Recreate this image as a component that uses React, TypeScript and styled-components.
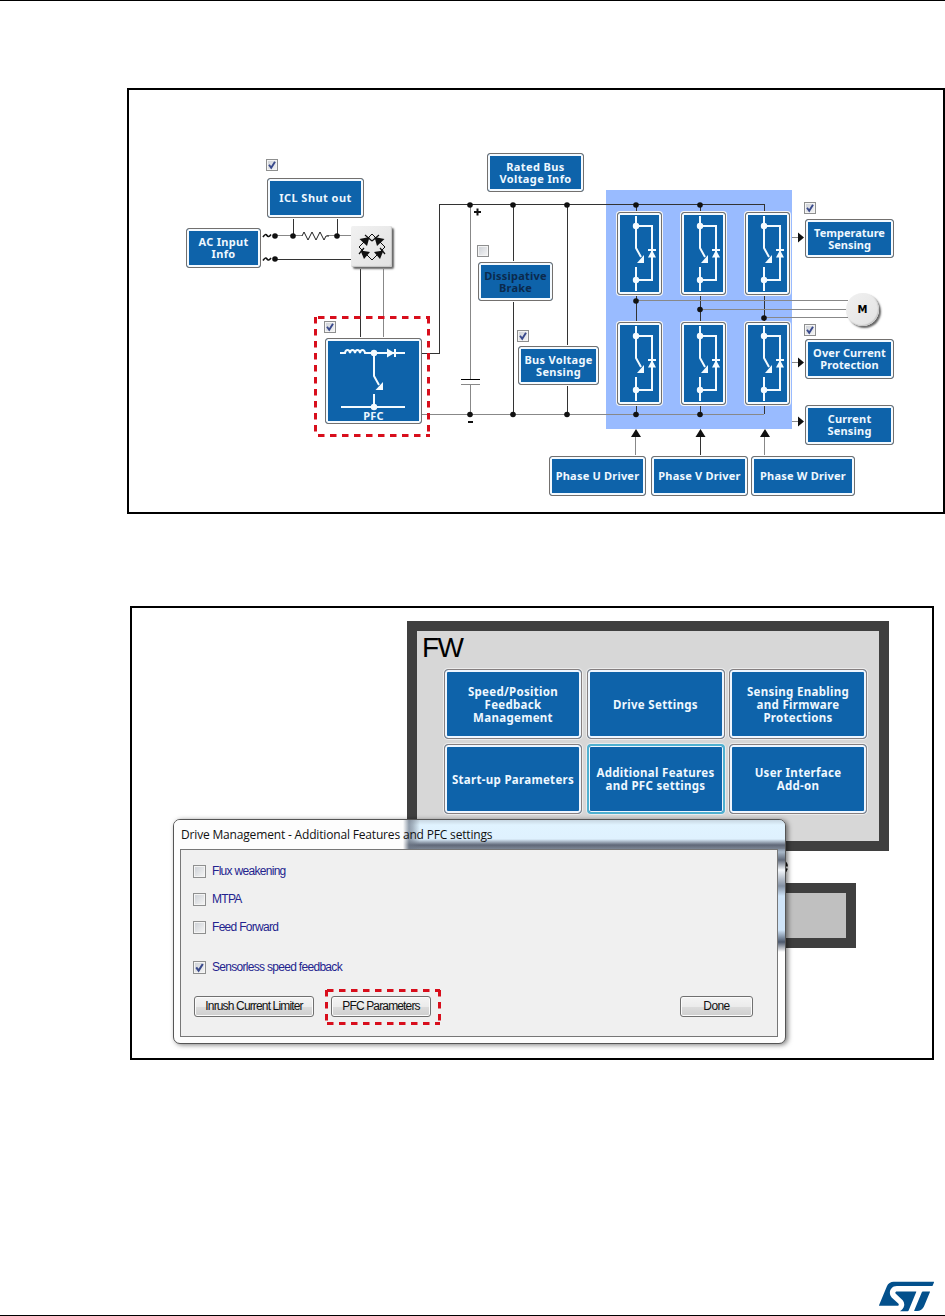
import React, { FC, ReactNode } from "react";
import styled, { createGlobalStyle } from "styled-components";
import { SiStmicroelectronics } from "react-icons/si";

const BLUE = "#0e63aa";
const RED = "#d80e1c";

// the schematic keeps its own coordinate system, this is its top left corner
const ORIGIN = { x: 129, y: 90 };

const GlobalStyle = createGlobalStyle`
  body {
    margin: 0;
    background: #fff;
  }
  * {
    box-sizing: border-box;
  }
`;

const Page = styled.div`
  width: 945px;
  height: 1316px;
  display: flex;
  flex-direction: column;
  overflow: hidden;
  border-top: 1px solid #000;
  border-bottom: 1px solid #000;
`;

const Frame = styled.section<{ $w: number; $h: number }>`
  position: relative;
  flex: none;
  width: ${(p) => p.$w}px;
  height: ${(p) => p.$h}px;
  border: 2px solid #000;
`;

const SchematicFrame = styled(Frame)`
  margin: 87px 0 0 127px;
`;

const FirmwareFrame = styled(Frame)`
  margin: 92px 0 0 130px;
`;

const Wires = styled.svg`
  position: absolute;
  inset: 0;
  width: 814px;
  height: 422px;
`;

interface Place {
  $x: number;
  $y: number;
}

const Node = styled.div<Place & { $w: number; $h: number; $halo?: boolean }>`
  position: absolute;
  left: ${(p) => p.$x - ORIGIN.x}px;
  top: ${(p) => p.$y - ORIGIN.y}px;
  width: ${(p) => p.$w}px;
  height: ${(p) => p.$h}px;
  display: flex;
  flex-direction: column;
  align-items: center;
  justify-content: center;
  background: ${BLUE};
  border: 1px solid #73706e;
  border-radius: 3px;
  box-shadow: inset 0 0 0 2px #f4faff
    ${(p) => (p.$halo ? ", 0 0 0 1px #f4f4f4" : "")};
`;

const Line = styled.span<{ $track?: number; $dark?: boolean }>`
  font: 700 11px/12px "Noto Sans", sans-serif;
  letter-spacing: ${(p) => p.$track ?? 0.2}px;
  white-space: nowrap;
  color: ${(p) => (p.$dark ? "#0b2a4d" : "#eef8ff")};
`;

const PfcLine = styled(Line)`
  margin-top: auto;
  padding-bottom: 1px;
`;

const CheckBox = styled.span<{ $size: number }>`
  flex: none;
  width: ${(p) => p.$size}px;
  height: ${(p) => p.$size}px;
  display: flex;
  border: 1px solid #8e8f8f;
  box-shadow: inset 0 0 0 1px #f4f4f4;
  background: linear-gradient(135deg, #cbcfd5, #f6f6f6);
`;

const NodeCheck = styled.div<Place>`
  position: absolute;
  left: ${(p) => p.$x - ORIGIN.x}px;
  top: ${(p) => p.$y - ORIGIN.y}px;
`;

const Symbol = styled.svg`
  position: absolute;
  left: -1px;
  top: -1px;
  fill: #f4fbff;
  stroke: none;

  path.wire {
    fill: none;
    stroke: #f4fbff;
    stroke-width: 2;
  }
`;

const Bevel = styled.div<Place & { $w: number; $h: number; $round?: boolean }>`
  position: absolute;
  left: ${(p) => p.$x - ORIGIN.x}px;
  top: ${(p) => p.$y - ORIGIN.y}px;
  width: ${(p) => p.$w}px;
  height: ${(p) => p.$h}px;
  display: flex;
  align-items: center;
  justify-content: center;
  border-radius: ${(p) => (p.$round ? "50%" : "2px")};
  background: linear-gradient(135deg, #f1f1f1, #e2e2e2);
  box-shadow: inset -1px -1px 1px #c4c4c4, 2px 2px 2px #666;
  font: 700 10px "DejaVu Sans", sans-serif;
  color: #000;
`;

const Tick: FC<{ checked?: boolean; size?: number }> = ({
  checked,
  size = 12,
}) => (
  <CheckBox $size={size}>
    {checked && (
      <svg viewBox="0 0 10 10" width="100%" height="100%">
        <path
          d="M2 4.8 L4.2 7.8 L8 1.8"
          fill="none"
          stroke="#3a4a8c"
          strokeWidth="1.9"
        />
      </svg>
    )}
  </CheckBox>
);

interface BlockProps {
  x: number;
  y: number;
  w: number;
  h: number;
  lines: string[];
  track?: number;
  dark?: boolean;
}

const BLOCKS: BlockProps[] = [
  { x: 267, y: 178, w: 97, h: 40, lines: ["ICL Shut out"], track: 0.45 },
  { x: 186, y: 228, w: 75, h: 40, lines: ["AC Input", "Info"], track: 0.3 },
  {
    x: 487,
    y: 153,
    w: 97,
    h: 39,
    lines: ["Rated Bus", "Voltage Info"],
    track: 0.4,
  },
  { x: 478, y: 262, w: 75, h: 39, lines: ["Dissipative", "Brake"], dark: true },
  { x: 518, y: 346, w: 81, h: 39, lines: ["Bus Voltage", "Sensing"], track: 0.3 },
  { x: 805, y: 219, w: 89, h: 39, lines: ["Temperature", "Sensing"], track: 0 },
  { x: 805, y: 339, w: 89, h: 40, lines: ["Over Current", "Protection"], track: 0.1 },
  { x: 805, y: 405, w: 89, h: 40, lines: ["Current", "Sensing"] },
  { x: 549, y: 456, w: 97, h: 40, lines: ["Phase U Driver"] },
  { x: 651, y: 456, w: 97, h: 40, lines: ["Phase V Driver"] },
  { x: 751, y: 456, w: 104, h: 40, lines: ["Phase W Driver"] },
];

const CHECKS = [
  { x: 266, y: 159, checked: true },
  { x: 324, y: 321, checked: true },
  { x: 477, y: 245, checked: false },
  { x: 517, y: 330, checked: true },
  { x: 804, y: 202, checked: true },
  { x: 804, y: 324, checked: true },
];

const SWITCHES = [617, 681, 745].flatMap((x) => [
  { x, y: 212 },
  { x, y: 322 },
]);

const DOTS = [
  [275, 236], [293, 236], [337, 236], [275, 259],
  [470, 205], [513, 205], [567, 205], [636, 205], [700, 205],
  [470, 414.5], [513, 414.5], [567, 414.5], [636, 414.5], [700, 414.5],
  [636, 301], [700, 309.5], [764, 318],
];

const SwitchSymbol = () => (
  <Symbol width="45" height="83" viewBox="617 212 45 83">
    <path
      className="wire"
      d="M636 216V248L641 257M636 226H652V280H636M636 267V291M648 250H656"
    />
    <circle cx="636" cy="226" r="3.2" />
    <circle cx="636" cy="280" r="3.2" />
    <path d="M652 250L656 257.5H648ZM644 255V263H637Z" />
  </Symbol>
);

const PfcSymbol = () => (
  <Symbol width="97" height="86" viewBox="325 338 97 86">
    <path
      className="wire"
      d="M340 353H345A2.6 4 0 0 1 350 353A2.6 4 0 0 1 355 353A2.6 4 0 0 1 360 353A2.6 4 0 0 1 365 353H405M395 349V357M374 353V376L379 385M374 394V407M341 407H405"
    />
    <circle cx="374" cy="353" r="3.2" />
    <circle cx="374" cy="407" r="3.2" />
    <path d="M387 348.5V357.5L394.5 353ZM383 382V390H375.5Z" />
  </Symbol>
);

const Schematic = () => (
  <SchematicFrame $w={818} $h={426}>
    <Wires viewBox="129 90 814 422">
      <rect x="606" y="190" width="186" height="239" fill="#99bbff" />
      <g fill="none" stroke="#333" shapeRendering="crispEdges">
        <path d="M293.5 219V236M337.5 219V236M275 259.5H352" />
        <path d="M360.5 269V337M422 353.5H439.5V204.5H764.5V211" />
        <path d="M513.5 205V261M513.5 302V414M567.5 205V345M567.5 386V414" />
        <path d="M636.5 205V211M700.5 205V211M636.5 296V321M700.5 296V321M764.5 296V321" />
        <path d="M636.5 406V414M700.5 406V414M764.5 406V414M700.5 436V455" />
        <path d="M461 379.5H480" stroke="#000" />
      </g>
      <g fill="none" stroke="#888" shapeRendering="crispEdges">
        <path d="M275 235.5H302M327 235.5H352M383.5 269V337" />
        <path d="M470.5 205V379M470.5 384V414M461 384H480M422 414.5H764" />
        <path d="M636 300.5H848M700 309.5H848M764 317.5H848" />
        <path d="M635.5 436V455M764.5 436V455M792 237.5H798M792 362.5H798M792 421.5H798" />
      </g>
      <path
        d="M302 236L304 232L308 240L312 232L316 240L320 232L324 240L326 236H329"
        fill="none"
        stroke="#222"
      />
      <g fill="#111">
        {DOTS.map(([x, y]) => (
          <circle key={`${x}-${y}`} cx={x} cy={y} r="2.8" />
        ))}
        <path d="M636 429L641 437H631ZM700.5 429L705.5 437H695.5ZM765 429L770 437H760Z" />
        <path d="M804 237.5L798 232.5V242.5ZM804 362.5L798 357.5V367.5ZM804 421.5L798 416.5V426.5Z" />
        <path d="M474 211H481V213H474ZM476.5 208.5H478.5V215.5H476.5ZM468 421H473V423H468Z" />
      </g>
      <g fill="none" stroke="#111" strokeWidth="1.6">
        <path d="M263 237Q265.500 233 267 235.500T271 234.500" />
        <path d="M263 260.500Q265.500 256.500 267 259T271 258" />
      </g>
      <g fill="none" stroke={RED} strokeWidth="3" strokeDasharray="6.5 5.5">
        <path d="M318 317.5H430M318 435.5H430" />
        <path d="M315.5 317V437M428.5 317V437" />
      </g>
    </Wires>

    {BLOCKS.map((b) => (
      <Node key={b.lines.join()} $x={b.x} $y={b.y} $w={b.w} $h={b.h}>
        {b.lines.map((text) => (
          <Line key={text} $track={b.track} $dark={b.dark}>
            {text}
          </Line>
        ))}
      </Node>
    ))}

    <Node $x={325} $y={338} $w={97} $h={86}>
      <PfcSymbol />
      <PfcLine>PFC</PfcLine>
    </Node>

    {SWITCHES.map((s) => (
      <Node key={`${s.x}-${s.y}`} $x={s.x} $y={s.y} $w={45} $h={83} $halo>
        <SwitchSymbol />
      </Node>
    ))}

    {CHECKS.map((c) => (
      <NodeCheck key={`${c.x}-${c.y}`} $x={c.x} $y={c.y}>
        <Tick checked={c.checked} />
      </NodeCheck>
    ))}

    {/* Rectifier bridge */}
    <Bevel $x={351} $y={226} $w={41} $h={41}>
      <svg width="30" height="30" viewBox="-15 -15 30 30">
        <path d="M0 -13L13 0L0 13L-13 0Z" fill="none" stroke="#111" />
        <path
          d="M-7 -12L0 -6M7 -12L0 -6M-13 7L-8 1M13 7L8 1"
          fill="none"
          stroke="#111"
          strokeWidth="1.2"
        />
        <g fill="#111">
          <path d="M-2.5 -10L-5 -1L-12.5 -8Z" />
          <path d="M2.5 -10L12.5 -8L5 -1Z" />
          <path d="M-11.5 3.5L-2 5L-8 12Z" />
          <path d="M11.5 3.5L8 12L2 5Z" />
        </g>
      </svg>
    </Bevel>

    {/* Motor */}
    <Bevel $x={846} $y={293} $w={33} $h={33} $round>
      M
    </Bevel>
  </SchematicFrame>
);

const Panel = styled.div`
  border: 10px solid #3f3f3f;
  background: #d7d7d7;
`;

const FirmwarePanel = styled(Panel)`
  width: 482px;
  height: 230px;
  margin: 13px 0 0 275px;
`;

const HardwarePanel = styled(Panel)`
  width: 150px;
  height: 65px;
  margin: 32px 0 0 574px;
  background: #c0c0c0;
`;

const PanelTitle = styled.div`
  height: 38px;
  padding: 1px 0 0 5px;
  font: 28px/32px "Liberation Sans", sans-serif;
  letter-spacing: -1.5px;
  color: #000;
`;

const TileGrid = styled.div`
  display: grid;
  grid-template-columns: repeat(3, 138px);
  grid-auto-rows: 70px;
  gap: 5px 4.5px;
  padding-left: 27px;
`;

const Tile = styled.div<{ $active?: boolean }>`
  display: flex;
  flex-direction: column;
  align-items: center;
  justify-content: center;
  background: ${BLUE};
  border: ${(p) => (p.$active ? "2px solid #4fb0d0" : "1px solid #857f80")};
  border-radius: 4px;
  box-shadow: inset 0 0 0 ${(p) => (p.$active ? 1 : 2)}px #eef6ff,
    0 0 0 1px #ececec;
`;

const TileLine = styled.span`
  font: 700 11.5px/13px "Noto Sans", sans-serif;
  letter-spacing: 0.3px;
  white-space: nowrap;
  color: #eef8ff;
`;

const TILES: { lines: string[]; active?: boolean }[] = [
  { lines: ["Speed/Position", "Feedback", "Management"] },
  { lines: ["Drive Settings"] },
  { lines: ["Sensing Enabling", "and Firmware", "Protections"] },
  { lines: ["Start-up Parameters"] },
  { lines: ["Additional Features", "and PFC settings"], active: true },
  { lines: ["User Interface", "Add-on"] },
];

const Dialog = styled.div`
  position: absolute;
  left: 41px;
  top: 211px;
  width: 613px;
  height: 225px;
  display: flex;
  flex-direction: column;
  padding: 0 7px 6px 6px;
  border: 1px solid #555;
  border-radius: 7px;
  background: linear-gradient(
      180deg,
      #dff2ff 0,
      #dff2ff 19px,
      #565f72 25px,
      #a9b8c8 32px,
      #5f6878 40px,
      #f4f8fc 50px,
      #8390a2 66px,
      #cfe4f8 76px,
      #cfe4f8 110px,
      #4c586c 122px,
      #fff 132px
    )
    right / 9px 100% no-repeat,
    #fdfdfd;
  box-shadow: 2px 1px 5px rgba(0, 0, 0, 0.5);
`;

const TitleBar = styled.div`
  height: 29px;
  margin: 0 -7px 0 -6px;
  padding: 6px 0 0 7px;
  border-radius: 6px 6px 0 0;
  background: linear-gradient(
        90deg,
        #fdfdfd 0,
        #fdfdfd 229px,
        rgba(110, 120, 135, 0.7) 235px,
        rgba(110, 120, 135, 0.5) 239px,
        rgba(223, 242, 255, 0) 246px
      )
      left / 260px 100% no-repeat,
    linear-gradient(180deg, #c8d7e2 0, #e0f3ff 5px, #dff1fe 19px, #5f6777 25px, #7c8694 29px);
  font: 12px/17px "Open Sans", "Noto Sans", sans-serif;
  letter-spacing: -0.17px;
  color: #111;
`;

const DialogBody = styled.div`
  flex: 1;
  display: flex;
  flex-direction: column;
  padding: 14px 24px 0 12px;
  border: 1px solid #777;
  background: #f0f0f0;
`;

const Option = styled.label<{ $gap?: number }>`
  height: 14px;
  display: flex;
  align-items: center;
  gap: 6px;
  margin-bottom: ${(p) => p.$gap ?? 14}px;
  font: 12px/14px "Liberation Sans", sans-serif;
  letter-spacing: -0.7px;
  color: #23238e;
`;

const Actions = styled.div`
  display: flex;
  margin: 8px 0 0 1px;
`;

const Button = styled.button<{ $w: number }>`
  width: ${(p) => p.$w}px;
  height: 21px;
  padding: 0;
  border: 1px solid #707070;
  border-radius: 3px;
  background: linear-gradient(#f4f4f4 0, #ebebeb 50%, #dcdcdc 51%, #cfcfcf);
  box-shadow: inset 0 0 0 1px #fbfbfb;
  font: 12px/17px "Liberation Sans", sans-serif;
  letter-spacing: -0.85px;
  color: #111;
`;

const DoneButton = styled(Button)`
  letter-spacing: -0.6px;
`;

const Highlight = styled.div`
  position: relative;
  margin: 0 auto 0 17px;
`;

const Dashes = styled.svg`
  position: absolute;
  left: -7px;
  top: -8px;
`;

const Footer = styled.footer`
  flex: 1;
  display: flex;
  justify-content: flex-end;
  align-items: flex-end;
  padding: 0 11px 0 0;
  color: #03508c;
`;

const Logo = styled(SiStmicroelectronics)`
  margin-bottom: -9px;
`;

const HiddenLetter = styled.svg`
  position: absolute;
  left: 650px;
  top: 251px;
`;

const Labelled: FC<{ checked?: boolean; gap?: number; children: ReactNode }> = ({
  checked,
  gap,
  children,
}) => (
  <Option $gap={gap}>
    <Tick size={13} checked={checked} />
    {children}
  </Option>
);

const Firmware = () => (
  <FirmwareFrame $w={804} $h={454}>
    <FirmwarePanel>
      <PanelTitle>FW</PanelTitle>
      <TileGrid>
        {TILES.map((tile) => (
          <Tile key={tile.lines[0]} $active={tile.active}>
            {tile.lines.map((text) => (
              <TileLine key={text}>{text}</TileLine>
            ))}
          </Tile>
        ))}
      </TileGrid>
    </FirmwarePanel>
    <HardwarePanel />
    <HiddenLetter width="8" height="16" viewBox="0 0 8 16">
      <path
        d="M1 2Q5 3 5 7.5M5 9.5Q4 13 1 15"
        fill="none"
        stroke="#111"
        strokeWidth="1.8"
      />
    </HiddenLetter>

    <Dialog>
      <TitleBar>Drive Management - Additional Features and PFC settings</TitleBar>
      <DialogBody>
        <Labelled>Flux weakening</Labelled>
        <Labelled>MTPA</Labelled>
        <Labelled gap={26}>Feed Forward</Labelled>
        <Labelled checked>Sensorless speed feedback</Labelled>
        <Actions>
          <Button $w={120}>Inrush Current Limiter</Button>
          <Highlight>
            <Button $w={100}>PFC Parameters</Button>
            <Dashes width="118" height="38" viewBox="0 0 118 38">
              <g
                fill="none"
                stroke={RED}
                strokeWidth="3"
                strokeDasharray="6.5 5.5"
              >
                <path d="M3 2.5H116M3 35.5H116" />
                <path d="M2.5 2V37M115.5 2V37" />
              </g>
            </Dashes>
          </Highlight>
          <DoneButton $w={73}>Done</DoneButton>
        </Actions>
      </DialogBody>
    </Dialog>
  </FirmwareFrame>
);

const App: FC = () => (
  <Page>
    <GlobalStyle />
    <Schematic />
    <Firmware />
    <Footer>
      <Logo size={55} />
    </Footer>
  </Page>
);

export default App;
